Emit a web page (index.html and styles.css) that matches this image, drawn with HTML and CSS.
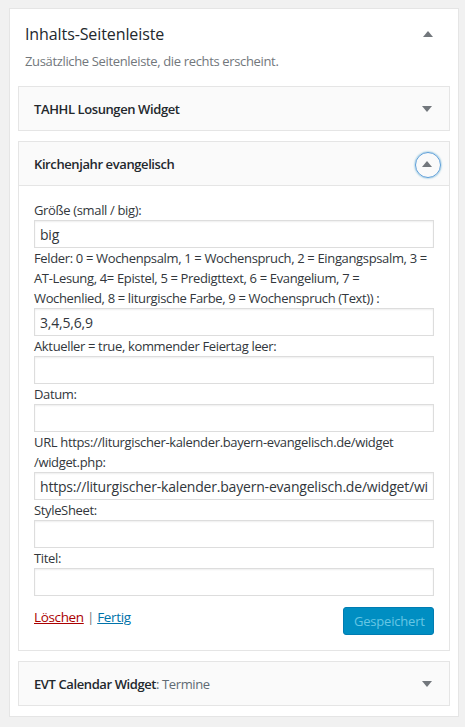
FILE: index.html
```html
<!DOCTYPE html>
<html lang="de">
<head>
<meta charset="utf-8">
<title>Widgets</title>
<link rel="stylesheet" href="styles.css">
</head>
<body>
<div class="wrap">
  <div class="sidebar">
    <div class="sidebar-head">
      <h2 class="sidebar-title">Inhalts-Seitenleiste</h2>
      <span class="toggle up"></span>
    </div>
    <p class="sidebar-desc">Zusätzliche Seitenleiste, die rechts erscheint.</p>

    <div class="widget">
      <div class="widget-top">
        <h3 class="widget-title">TAHHL Losungen Widget</h3>
        <span class="toggle down"></span>
      </div>
    </div>

    <div class="widget open">
      <div class="widget-top">
        <h3 class="widget-title">Kirchenjahr evangelisch</h3>
        <span class="toggle up focus"></span>
      </div>
      <div class="widget-inside">
        <div class="field">
          <label>Größe (small / big):</label>
          <input class="widefat" type="text" value="big">
        </div>
        <div class="field">
          <label>Felder: 0 = Wochenpsalm, 1 = Wochenspruch, 2 = Eingangspsalm, 3 =<br>AT-Lesung, 4= Epistel, 5 = Predigttext, 6 = Evangelium, 7 =<br>Wochenlied, 8 = liturgische Farbe, 9 = Wochenspruch (Text)) :</label>
          <input class="widefat" type="text" value="3,4,5,6,9">
        </div>
        <div class="field">
          <label>Aktueller = true, kommender Feiertag leer:</label>
          <input class="widefat" type="text" value="">
        </div>
        <div class="field">
          <label>Datum:</label>
          <input class="widefat" type="text" value="">
        </div>
        <div class="field">
          <label>URL https://liturgischer-kalender.bayern-evangelisch.de/widget<br>/widget.php:</label>
          <input class="widefat" type="text" value="https://liturgischer-kalender.bayern-evangelisch.de/widget/widget.php">
        </div>
        <div class="field">
          <label>StyleSheet:</label>
          <input class="widefat" type="text" value="">
        </div>
        <div class="field">
          <label>Titel:</label>
          <input class="widefat" type="text" value="">
        </div>
        <div class="widget-actions">
          <div class="links">
            <a class="delete" href="#">Löschen</a> <span class="sep">|</span> <a class="close" href="#">Fertig</a>
          </div>
          <button class="button-primary" disabled>Gespeichert</button>
        </div>
      </div>
    </div>

    <div class="widget">
      <div class="widget-top">
        <h3 class="widget-title">EVT Calendar Widget<span class="in-title">: Termine</span></h3>
        <span class="toggle down"></span>
      </div>
    </div>
  </div>
</div>
</body>
</html>
```

FILE: styles.css
```css
* { box-sizing: border-box; }
html, body { margin: 0; padding: 0; }
body {
  background: #f1f1f1;
  font-family: "Open Sans", "Noto Sans", sans-serif;
  color: #32373c;
  font-size: 13px;
  letter-spacing: -0.35px;
}
.wrap {
  padding: 8px 0 0 9px;
}
.sidebar {
  width: 450px;
  background: #fff;
  border: 1px solid #e5e5e5;
  padding: 0 8px 10px 8px;
}
.sidebar-head {
  display: flex;
  align-items: center;
  justify-content: space-between;
  height: 24px;
  margin-top: 13px;
  padding-left: 7px;
}
.sidebar-title {
  margin: 0;
  font-size: 16px;
  line-height: 24px;
  font-weight: 500;
  letter-spacing: -0.1px;
  color: #23282d;
}
.sidebar-desc {
  margin: 5px 0 15px 7px;
  line-height: 20px;
  color: #72777c;
}
.widget {
  border: 1px solid #e5e5e5;
  background: #fff;
  margin-bottom: 10px;
}
.widget:last-child { margin-bottom: 0; }
.widget-top {
  height: 43px;
  background: #fafafa;
  display: flex;
  align-items: center;
  justify-content: space-between;
  padding-left: 15px;
}
.widget-title {
  margin: 0;
  font-size: 13px;
  font-weight: 600;
  letter-spacing: -0.4px;
  color: #23282d;
}
.in-title {
  font-weight: 400;
  color: #606a73;
}
.toggle {
  width: 36px;
  height: 36px;
  display: flex;
  align-items: center;
  justify-content: center;
  margin-right: 4px;
  position: relative;
}
.sidebar-head .toggle { height: 24px; margin-right: 4px; }
.toggle::before {
  content: "";
  width: 0;
  height: 0;
  border-left: 5px solid transparent;
  border-right: 5px solid transparent;
}
.toggle.down::before { border-top: 6px solid #72777c; }
.toggle.up::before { border-bottom: 6px solid #72777c; }
.toggle.focus::after {
  content: "";
  position: absolute;
  left: 6px;
  top: 6px;
  width: 24px;
  height: 24px;
  border-radius: 50%;
  border: 1px solid #5b9dd9;
  box-shadow: 0 0 2px rgba(30, 140, 190, 0.8);
}
.widget-inside {
  border-top: 1px solid #e5e5e5;
  padding: 14px 15px 15px 15px;
}
.field label {
  display: block;
  line-height: 20px;
  color: #32373c;
}
.widefat {
  display: block;
  width: 100%;
  height: 28px;
  margin: 0;
  padding: 3px 5px;
  border: 1px solid #ddd;
  box-shadow: inset 0 1px 2px rgba(0, 0, 0, 0.07);
  font-family: inherit;
  font-size: 14px;
  letter-spacing: -0.2px;
  color: #32373c;
  background: #fff;
  outline: none;
}
.widget-actions {
  display: flex;
  justify-content: space-between;
  align-items: flex-start;
  padding-top: 11px;
}
.links {
  line-height: 20px;
  font-size: 13.5px;
  color: #555;
}
.sep { color: #72777c; }
.delete { color: #a00; }
.close { color: #0073aa; }
.button-primary {
  height: 28px;
  padding: 0 10px;
  background: #008ec2;
  border: 1px solid #007cb2;
  border-radius: 3px;
  color: #66c6e4;
  font-family: inherit;
  font-size: 13px;
  letter-spacing: -0.2px;
  width: 91px;
}
```
